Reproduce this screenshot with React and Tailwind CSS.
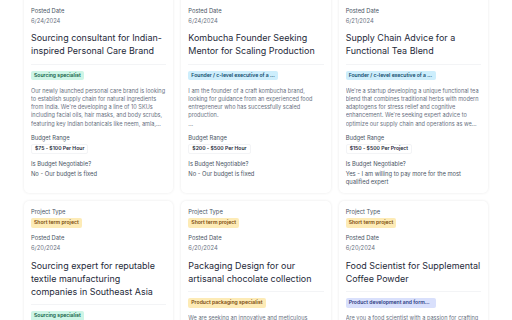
import React from 'react';

const tones = {
  amber: 'bg-[#fdebb6] text-[#7a4a0c]',
  green: 'bg-[#cdf5e6] text-[#125c45]',
  sky: 'bg-[#cdeefc] text-[#0f4a6b]',
  indigo: 'bg-[#d9e0fc] text-[#2a3a80]',
};

const jobs = [
  {
    id: 1,
    projectType: 'Short term project',
    projectTone: 'amber',
    posted: '6/24/2024',
    title: 'Sourcing consultant for Indian-inspired Personal Care Brand',
    tag: 'Sourcing specialist',
    tagTone: 'green',
    description:
      "Our newly launched personal care brand is looking to establish supply chain for natural ingredients from India. We're developing a line of 10 SKUs including facial oils, hair masks, and body scrubs, featuring key Indian botanicals like neem, amla, turmeric and brahmi.",
    budget: '$75 - $100 Per Hour',
    negotiable: 'No - Our budget is fixed',
  },
  {
    id: 2,
    projectType: 'Long term partnership',
    projectTone: 'green',
    posted: '6/24/2024',
    title: 'Kombucha Founder Seeking Mentor for Scaling Production',
    tag: 'Founder / c-level executive of a food brand',
    tagTone: 'sky',
    description:
      'I am the founder of a craft kombucha brand, looking for guidance from an experienced food entrepreneur who has successfully scaled production.\n...',
    budget: '$200 - $500 Per Hour',
    negotiable: 'No - Our budget is fixed',
  },
  {
    id: 3,
    projectType: 'Long term partnership',
    projectTone: 'green',
    posted: '6/21/2024',
    title: 'Supply Chain Advice for a Functional Tea Blend',
    tag: 'Founder / c-level executive of a beverage brand',
    tagTone: 'sky',
    description:
      "We're a startup developing a unique functional tea blend that combines traditional herbs with modern adaptogens for stress relief and cognitive enhancement. We're seeking expert advice to optimize our supply chain and operations as we scale up production.",
    budget: '$150 - $500 Per Project',
    negotiable: 'Yes - I am willing to pay more for the most qualified expert',
  },
  {
    id: 4,
    projectType: 'Short term project',
    projectTone: 'amber',
    posted: '6/20/2024',
    title: 'Sourcing expert for reputable textile manufacturing companies in Southeast Asia',
    tag: 'Sourcing specialist',
    tagTone: 'green',
    description:
      'We are an apparel start-up looking for an expert who can connect us with trusted textile manufacturers in Vietnam, Indonesia and Thailand for our first production run.',
    budget: '$50 - $100 Per Hour',
    negotiable: 'No - Our budget is fixed',
  },
  {
    id: 5,
    projectType: 'Short term project',
    projectTone: 'amber',
    posted: '6/20/2024',
    title: 'Packaging Design for our artisanal chocolate collection',
    tag: 'Product packaging specialist',
    tagTone: 'amber',
    description:
      'We are seeking an innovative and meticulous packaging designer to create elegant, sustainable packaging for our new line of artisanal chocolate bars.',
    budget: '$100 - $300 Per Project',
    negotiable: 'Yes - I am willing to pay more for the most qualified expert',
  },
  {
    id: 6,
    projectType: 'Short term project',
    projectTone: 'amber',
    posted: '6/20/2024',
    title: 'Food Scientist for Supplemental Coffee Powder',
    tag: 'Product development and formulation',
    tagTone: 'indigo',
    description:
      'Are you a food scientist with a passion for crafting functional beverages? We are developing a coffee powder enriched with adaptogens and vitamins.',
    budget: '$80 - $150 Per Hour',
    negotiable: 'No - Our budget is fixed',
  },
];

function Badge({ tone, children }) {
  return (
    <div className="flex">
      <span
        className={`block max-w-[90px] truncate rounded-[2px] px-[3px] text-[5.1px] font-semibold leading-[9.4px] ${tones[tone]}`}
      >
        {children}
      </span>
    </div>
  );
}

function Label({ children }) {
  return <p className="text-[5.8px] leading-[8.3px] text-gray-600">{children}</p>;
}

function JobCard({ job }) {
  return (
    <div className="flex flex-col gap-[6.3px] rounded-[5px] bg-white p-[7px] shadow-[0_0_3px_rgba(0,0,0,0.09)]">
      <div className="flex flex-col gap-[1.7px]">
        <Label>Project Type</Label>
        <Badge tone={job.projectTone}>{job.projectType}</Badge>
      </div>
      <div className="flex flex-col gap-[1.7px]">
        <Label>Posted Date</Label>
        <p className="text-[5.8px] leading-[8.3px] text-gray-500">{job.posted}</p>
      </div>
      <h3 className="text-[8.95px] leading-[13px] text-gray-800">{job.title}</h3>
      <div className="h-px bg-gray-100" />
      <Badge tone={job.tagTone}>{job.tag}</Badge>
      <p className="line-clamp-5 whitespace-pre-line text-[5.6px] leading-[8.3px] text-gray-500">
        {job.description}
      </p>
      <div className="flex flex-col gap-[1.5px]">
        <Label>Budget Range</Label>
        <div className="flex">
          <span className="block rounded-[2px] border border-gray-100 bg-white px-[3px] text-[5.1px] font-semibold leading-[7.4px] text-gray-800">
            {job.budget}
          </span>
        </div>
      </div>
      <div className="flex flex-col gap-[1.7px]">
        <Label>Is Budget Negotiable?</Label>
        <p className="text-[5.8px] leading-[8.3px] text-gray-600">{job.negotiable}</p>
      </div>
    </div>
  );
}

export default function App() {
  return (
    <div
      className="h-[320px] overflow-hidden bg-white"
      style={{ fontFamily: 'Inter, "Noto Sans", sans-serif' }}
    >
      <div className="-mt-[26px] grid grid-cols-3 gap-x-2 gap-y-2 px-6">
        {jobs.map((job) => (
          <JobCard key={job.id} job={job} />
        ))}
      </div>
    </div>
  );
}
